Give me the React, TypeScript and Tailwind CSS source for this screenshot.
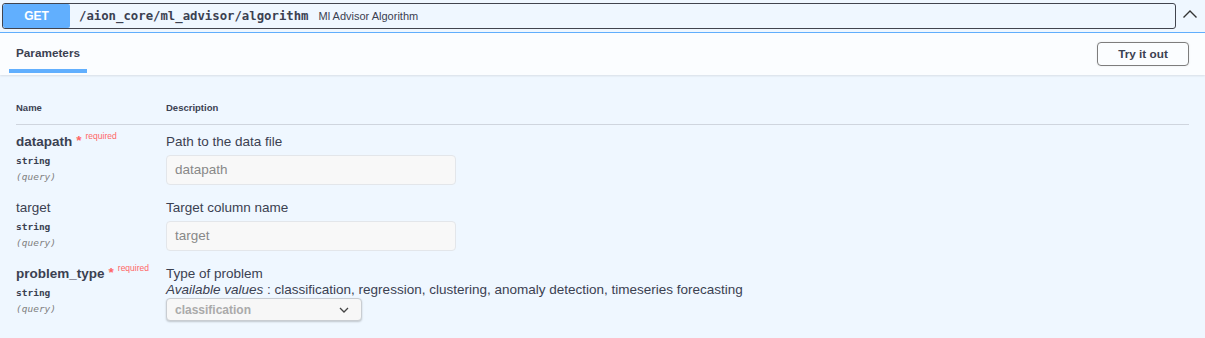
import React from "react";

const sans = "font-['Liberation_Sans',Arial,sans-serif]";
const mono = "font-['DejaVu_Sans_Mono',monospace]";

function Req() {
  return (
    <>
      <span className="ml-[4px] text-[13.5px] font-bold text-[#f66] relative top-[-1px]">*</span>
      <span className="ml-[4px] text-[8.5px] font-normal text-[#f66] relative top-[-7px]">required</span>
    </>
  );
}

function Row({
  name,
  req,
  children,
}: {
  name: string;
  req?: boolean;
  children: React.ReactNode;
}) {
  return (
    <div className="flex pt-[8px] pb-[6px]">
      <div className="w-[150px] shrink-0">
        <div className={`h-[18px] leading-[18px] text-[13.5px] ${req ? "font-bold" : ""} text-[#3b4151] whitespace-nowrap`}>
          {name}
          {req && <Req />}
        </div>
        <div className={`mt-[2px] h-[16px] leading-[16px] text-[9.5px] font-bold text-[#3b4151] ${mono}`}>string</div>
        <div className={`h-[16px] leading-[16px] text-[9.5px] italic text-[#808080] ${mono}`}>(query)</div>
      </div>
      <div className="flex-1">{children}</div>
    </div>
  );
}

export default function App() {
  return (
    <div className={`w-[1205px] h-[338px] bg-[#eff7ff] ${sans} text-[#3b4151] overflow-hidden`}>
      {/* summary */}
      <div className="h-[33px] border-b border-[#61affe] flex items-start pt-[3px] pl-[2px]">
        <div className="w-[1174px] h-[26px] border-[1.5px] border-[#41444e] rounded-[3px] flex items-stretch overflow-hidden">
          <div className="w-[67px] bg-[#61affe] rounded-[2px] flex items-center justify-center text-white font-bold text-[12px]">
            GET
          </div>
          <div className={`flex items-center pl-[9px] text-[12.3px] font-semibold text-[#3b4151] ${mono}`}>
            /aion_core/ml_advisor/algorithm
          </div>
          <div className="flex items-center pl-[10px] text-[11px] text-[#3b4151]">Ml Advisor Algorithm</div>
        </div>
        <div className="ml-[6px] mt-[6px]">
          <svg width="16" height="10" viewBox="0 0 16 10" fill="none">
            <path d="M1.5 8.5 L8 2 L14.5 8.5" stroke="#333" strokeWidth="1.4" />
          </svg>
        </div>
      </div>
      {/* tab header */}
      <div className="h-[42px] bg-[#fbfdff] shadow-[0_1px_2px_rgba(0,0,0,0.1)] flex items-stretch justify-between pl-[9px] pr-[16px] relative">
        <div className="w-[78px] flex flex-col">
          <div className="flex-1 flex items-center pl-[7px] pt-[4px] text-[11.75px] font-bold text-[#3b4151]">Parameters</div>
          <div className="h-[4px] bg-[#61affe] mb-[2px]" />
        </div>
        <div className="flex items-center">
          <div className="w-[92px] h-[24px] border-[1.5px] border-[#7d7d7d] rounded-[4px] flex items-center justify-center text-[11.75px] font-bold text-[#3b4151] shadow-[0_0_2px_rgba(0,0,0,0.1)]">
            Try it out
          </div>
        </div>
      </div>
      {/* table */}
      <div className="pt-[25px] px-[16px]">
        <div className="flex border-b border-[#cfd5de] pb-[8px] w-[1173px]">
          <div className="w-[150px] h-[16px] leading-[16px] text-[9.5px] font-bold">Name</div>
          <div className="h-[16px] leading-[16px] text-[9.5px] font-bold">Description</div>
        </div>
        <Row name="datapath" req>
          <div className="h-[18px] leading-[18px] text-[13.5px]">Path to the data file</div>
          <div className="mt-[4px] w-[290px] h-[30px] rounded-[4px] border border-[#e3e6ea] bg-[#f8f8f8] flex items-center pl-[8px] text-[13.5px] text-[#888]">
            datapath
          </div>
        </Row>
        <Row name="target">
          <div className="h-[18px] leading-[18px] text-[13.5px]">Target column name</div>
          <div className="mt-[4px] w-[290px] h-[30px] rounded-[4px] border border-[#e3e6ea] bg-[#f8f8f8] flex items-center pl-[8px] text-[13.5px] text-[#888]">
            target
          </div>
        </Row>
        <Row name="problem_type" req>
          <div className="h-[17px] leading-[17px] text-[13.5px]">Type of problem</div>
          <div className="h-[16px] leading-[16px] text-[13.5px] whitespace-nowrap">
            <i>Available values</i> : classification, regression, clustering, anomaly detection, timeseries forecasting
          </div>
          <div className="w-[196px] h-[23px] rounded-[4px] border border-[#c9cdd2] bg-[#f7f7f7] shadow-[0_1px_2px_rgba(0,0,0,0.2)] flex items-center justify-between pl-[8px] pr-[12px] text-[12px] font-bold text-[#aaa]">
            <span>classification</span>
            <svg width="10" height="6" viewBox="0 0 10 6" fill="none">
              <path d="M1 1 L5 5 L9 1" stroke="#444" strokeWidth="1.3" />
            </svg>
          </div>
        </Row>
      </div>
    </div>
  );
}
